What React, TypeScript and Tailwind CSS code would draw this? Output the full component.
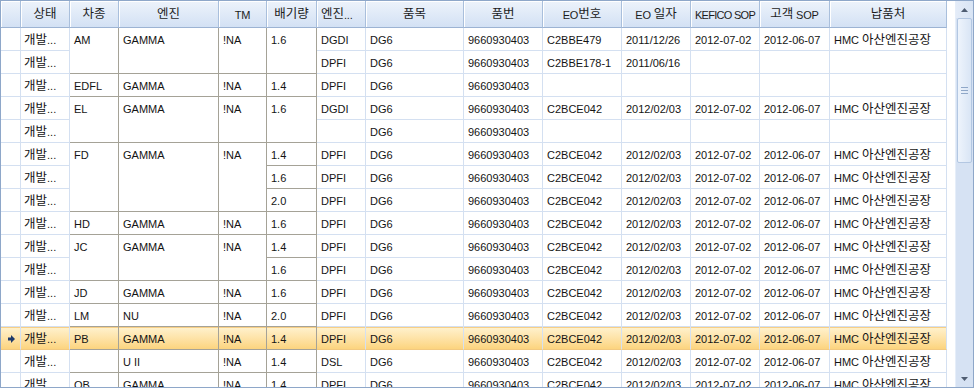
import React from "react";

type C = string | [string, number] | null;

const F = "'Liberation Sans','Noto Sans CJK KR',sans-serif";

const tail: C[] = ["DG6", "9660930403", "C2BCE042", "2012/02/03", "2012-07-02", "2012-06-07", "HMC 아산엔진공장"];

const rows: C[][] = [
  ["", "개발...", ["AM", 2], ["GAMMA", 2], ["!NA", 2], ["1.6", 2], "DGDI", "DG6", "9660930403", "C2BBE479", "2011/12/26", "2012-07-02", "2012-06-07", "HMC 아산엔진공장"],
  ["", "개발...", null, null, null, null, "DPFI", "DG6", "9660930403", "C2BBE178-1", "2011/06/16", "", "", ""],
  ["", "개발...", "EDFL", "GAMMA", "!NA", "1.4", "DPFI", "DG6", "9660930403", "", "", "", "", ""],
  ["", "개발...", ["EL", 2], ["GAMMA", 2], ["!NA", 2], ["1.6", 2], "DGDI", ...tail],
  ["", "개발...", null, null, null, null, "", "DG6", "9660930403", "", "", "", "", ""],
  ["", "개발...", ["FD", 3], ["GAMMA", 3], ["!NA", 3], "1.4", "DPFI", ...tail],
  ["", "개발...", null, null, null, "1.6", "DPFI", ...tail],
  ["", "개발...", null, null, null, "2.0", "DPFI", ...tail],
  ["", "개발...", "HD", "GAMMA", "!NA", "1.6", "DPFI", ...tail],
  ["", "개발...", ["JC", 2], ["GAMMA", 2], ["!NA", 2], "1.4", "DPFI", ...tail],
  ["", "개발...", null, null, null, "1.6", "DPFI", ...tail],
  ["", "개발...", "JD", "GAMMA", "!NA", "1.6", "DPFI", ...tail],
  ["", "개발...", "LM", "NU", "!NA", "2.0", "DPFI", ...tail],
  ["", "개발...", "PB", "GAMMA", "!NA", "1.4", "DPFI", ...tail],
  ["", "개발...", "", "U II", "!NA", "1.4", "DSL", ...tail],
  ["", "개발...", "OB", "GAMMA", "!NA", "1.4", "DPFI", ...tail],
];

const SELECTED = 13;
const FOCUS_COL = 12;

const spanCls: Record<number, string> = { 1: "", 2: "row-span-2", 3: "row-span-3" };

const headers = ["", "상태", "차종", "엔진", "TM", "배기량", "엔진...", "품목", "품번", "EO번호", "EO 일자", "KEFICO SOP", "고객 SOP", "납품처"];

const GRID = "grid grid-cols-[20px_49px_49px_100px_48px_50px_49px_98px_79px_79px_69px_69px_70px_117px] w-[946px]";

function Mixed({ text, latin, korean }: { text: string; latin: string; korean: string }) {
  const parts = text.split(/([\uAC00-\uD7A3]+)/).filter((p) => p.length > 0);
  return (
    <>
      {parts.map((p, i) =>
        /[\uAC00-\uD7A3]/.test(p) ? (
          <span key={i} className={korean}>{p}</span>
        ) : (
          <span key={i} className={latin}>{p.replace(/ /g, "\u00a0")}</span>
        )
      )}
    </>
  );
}

function Arrow() {
  return (
    <svg width="7" height="8" viewBox="0 0 7 8">
      <path d="M0 2.5h3V0l4 4-4 4V5.5H0z" fill="#1f3b6b" />
    </svg>
  );
}

function Header() {
  return (
    <div className={GRID + " h-[27px]"}>
      {headers.map((h, i) => (
        <div
          key={i}
          className={
            "h-[27px] border-r border-b border-r-[#a9bfdc] border-b-[#9cb3d3] bg-gradient-to-b from-[#edf3fb] to-[#d3e1f4] shadow-[inset_1px_1px_0_#ffffff] flex items-center overflow-hidden whitespace-nowrap text-[#1c1c1c] " +
            (i === 6 ? "justify-start pl-[4px]" : "justify-center")
          }
        >
          <Mixed
            text={h}
            latin={i === 11 ? "text-[11px] tracking-[-0.7px] relative top-[1px]" : "text-[11px] tracking-[-0.2px] relative top-[1px]"}
            korean="text-[12.5px]"
          />
        </div>
      ))}
    </div>
  );
}

function Body() {
  const cells: React.ReactNode[] = [];
  rows.forEach((r, ri) => {
    const sel = ri === SELECTED;
    r.forEach((c, ci) => {
      if (c === null) return;
      const v = Array.isArray(c) ? c[0] : c;
      const span = Array.isArray(c) ? c[1] : 1;
      const merged = ci >= 2 && ci <= 5;
      const border = merged
        ? "border-r-[#a5a297] border-b-[#a5a297]"
        : sel
        ? "border-r-[#d4e0f1] border-b-[#f2c97f]"
        : "border-r-[#d4e0f1] border-b-[#d4e0f1]";
      const bg = sel
        ? "bg-gradient-to-b from-[#fff2cf] to-[#fcd47e] shadow-[inset_0_1px_0_#f7cf86]"
        : "bg-white";
      const focus = sel && ci === FOCUS_COL ? "shadow-[inset_0_0_0_2px_#f5963f]" : "";
      cells.push(
        <div
          key={ri + "-" + ci}
          className={
            "border-r border-b overflow-hidden whitespace-nowrap text-[#141414] " +
            border + " " + bg + " " + focus + " " + spanCls[span]
          }
        >
          <div
            className={
              "h-[22px] flex items-center pt-[2px] " +
              (ci === 0 ? "justify-center pl-[1px]" : ci === 1 ? "pl-[3px]" : "pl-[4px]")
            }
          >
            {ci === 0 && sel ? (
              <Arrow />
            ) : (
              <Mixed text={v} latin="text-[11px]" korean="text-[12.5px]" />
            )}
          </div>
        </div>
      );
    });
  });
  return <div className={GRID + " auto-rows-[23px]"}>{cells}</div>;
}

function Tri({ up }: { up: boolean }) {
  return (
    <svg width="7" height="4" viewBox="0 0 7 4">
      <path d={up ? "M0 4L3.5 0L7 4z" : "M0 0L7 0L3.5 4z"} fill="#4f5d72" />
    </svg>
  );
}

function Scrollbar() {
  return (
    <div className="w-[18px] h-full flex flex-col bg-[#d6e2f3] border-l border-[#e6eef9]">
      <div className="h-[17px] flex items-center justify-center bg-gradient-to-r from-[#e4ecf8] to-[#d8e4f4]">
        <Tri up />
      </div>
      <div className="h-[145px] mx-[1px] rounded-[2px] border border-[#b3c7e2] bg-gradient-to-r from-[#eef4fc] to-[#d9e5f5] flex flex-col items-center justify-center gap-[2px]">
        <div className="w-[7px] h-[1px] bg-[#8fa7c8]" />
        <div className="w-[7px] h-[1px] bg-[#8fa7c8]" />
        <div className="w-[7px] h-[1px] bg-[#8fa7c8]" />
      </div>
      <div className="flex-1" />
      <div className="h-[17px] flex items-center justify-center">
        <Tri up={false} />
      </div>
    </div>
  );
}

export default function App() {
  return (
    <div className="w-[974px] h-[388px] border border-[#8ea7c9] flex bg-white overflow-hidden" style={{ fontFamily: F }}>
      <div className="w-[954px] h-full overflow-hidden bg-white">
        <Header />
        <Body />
      </div>
      <Scrollbar />
    </div>
  );
}
